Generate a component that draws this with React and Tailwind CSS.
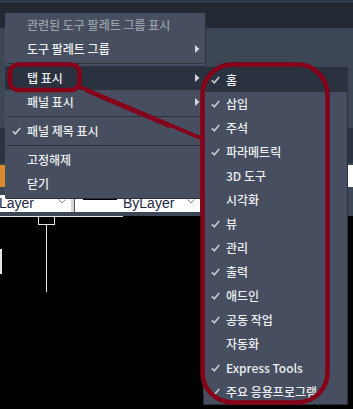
import React from 'react'

const FONT = { fontFamily: '"Noto Sans CJK KR", "Noto Sans", sans-serif' }

function Check() {
  return (
    <svg width="9" height="8" viewBox="0 0 9 8" className="shrink-0">
      <polyline points="0.8,4.2 3.3,6.8 8.2,0.9" fill="none" stroke="#c9ccd2" strokeWidth="1.6" />
    </svg>
  )
}

function Arrow() {
  return (
    <svg width="5" height="8" viewBox="0 0 5 8" className="absolute right-[5px] top-[8px]">
      <polygon points="0,0 4.5,4 0,8" fill="#d5d8dd" />
    </svg>
  )
}

function Chevron() {
  return (
    <svg width="8" height="5" viewBox="0 0 8 5" className="mr-[5px] mb-[8px] shrink-0">
      <polyline points="0.5,0.5 4,4 7.5,0.5" fill="none" stroke="#8a8f98" strokeWidth="1" />
    </svg>
  )
}

function MenuRow({ label, checked, sub, hover, disabled }) {
  return (
    <div className={`relative flex items-center h-[24px] ${hover ? 'bg-[#2b323f]' : ''}`}>
      <div className="w-[22px] flex justify-center pl-[1px]">{checked && <Check />}</div>
      <span className={`text-[12px] font-medium leading-none ${disabled ? 'text-[#9aa0aa]' : 'text-[#eceef1]'}`}>
        {label}
      </span>
      {sub && <Arrow />}
    </div>
  )
}

function Sep() {
  return (
    <div className="h-[5px] flex items-center px-[2px]">
      <div className="h-px w-full bg-[#2c323d]" />
    </div>
  )
}

const tabs = [
  ['홈', true],
  ['삽입', true],
  ['주석', true],
  ['파라메트릭', true],
  ['3D 도구', false],
  ['시각화', false],
  ['뷰', true],
  ['관리', true],
  ['출력', true],
  ['애드인', true],
  ['공동 작업', true],
  ['자동화', false],
  ['Express Tools', true],
  ['주요 응용프로그램', true],
]

export default function App() {
  return (
    <div className="relative w-[353px] h-[409px] overflow-hidden bg-black" style={FONT}>
      {/* background application chrome */}
      <div className="flex flex-col">
        <div className="h-[3px] bg-[#323a47]" />
        <div className="h-[25px] bg-[#222933]" />
        <div className="h-[100px] bg-[#3d4655]" />
        <div className="h-[35px] bg-[#2c3340]" />
        <div className="h-[24px] flex justify-between bg-[#3d4655] pt-[2px]">
          <div className="w-[5px] h-[22px] bg-[#d98a2b]" />
          <div className="w-[5px] h-[22px] bg-white" />
        </div>
        <div className="h-[8px] bg-[#3d4655]" />
        <div className="h-[17px] flex bg-[#3d4655]" style={{ fontFamily: '"Liberation Sans", Arial, sans-serif' }}>
          <div className="w-[71px] bg-white flex items-end justify-between overflow-hidden">
            <span className="text-[14px] leading-none text-[#1c2640] -ml-[1px] mb-[2px]">Layer</span>
            <Chevron />
          </div>
          <div className="w-[7px] flex">
            <div className="w-[3px] bg-[#d6d6d6]" />
            <div className="w-px bg-[#555]" />
            <div className="w-[3px] bg-white" />
          </div>
          <div className="w-[122px] bg-white flex items-end">
            <div className="w-[34px] h-[2px] bg-black ml-[5px] mb-[12px] shrink-0" />
            <span className="text-[14px] leading-none text-[#1c2640] ml-[6px] mb-[2px]">ByLayer</span>
            <div className="flex-1" />
            <Chevron />
          </div>
          <div className="flex-1" />
        </div>
        <div className="h-[4px] bg-[#3d4655]" />
        <svg width="353" height="193" className="block">
          <line x1="0" y1="0.5" x2="123" y2="0.5" stroke="#e6e6e6" />
          <rect x="38.5" y="0.5" width="16" height="8" fill="none" stroke="#e6e6e6" />
          <line x1="46.5" y1="8" x2="46.5" y2="76" stroke="#e6e6e6" />
          <line x1="1" y1="33" x2="1" y2="58" stroke="#e6e6e6" strokeWidth="2" />
        </svg>
      </div>

      {/* main context menu */}
      <div className="absolute left-[5px] top-[13px] w-[200px] bg-[#464e5f] pb-[2px] shadow-[1px_1px_0_#2a303a]">
        <MenuRow label="관련된 도구 팔레트 그룹 표시" disabled />
        <MenuRow label="도구 팔레트 그룹" sub />
        <Sep />
        <MenuRow label="탭 표시" sub hover />
        <MenuRow label="패널 표시" sub />
        <Sep />
        <MenuRow label="패널 제목 표시" checked />
        <Sep />
        <MenuRow label="고정해제" />
        <MenuRow label="닫기" />
      </div>

      {/* tabs submenu */}
      <div className="absolute left-[203px] top-[67px] w-[145px] bg-[#464e5f] border border-[#2a303a]">
        {tabs.map(([label, checked], i) => (
          <MenuRow key={label} label={label} checked={checked} hover={i === 0} />
        ))}
      </div>

      {/* red annotation */}
      <svg width="353" height="409" className="absolute inset-0 pointer-events-none">
        <rect x="10" y="64.5" width="69.5" height="25.5" rx="8" fill="none" stroke="#850018" strokeWidth="4.5" />
        <line x1="80" y1="87" x2="203" y2="139" stroke="#850018" strokeWidth="4" />
        <line x1="86" y1="92" x2="170" y2="128" stroke="#850018" strokeWidth="1.2" />
        <rect x="202.5" y="64.5" width="125" height="338" rx="30" fill="none" stroke="#850018" strokeWidth="4.5" />
      </svg>
    </div>
  )
}
